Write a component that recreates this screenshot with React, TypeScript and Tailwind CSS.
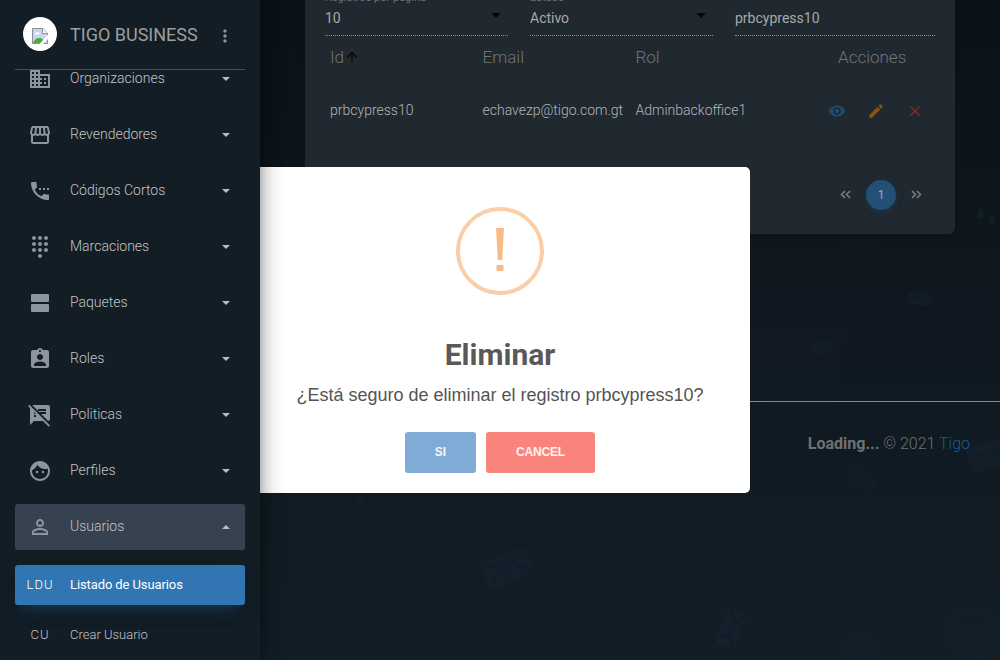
import type { ReactNode } from "react";
import {
  MdArrowUpward,
  MdAssignmentInd,
  MdBusiness,
  MdClose,
  MdDialpad,
  MdEdit,
  MdFace,
  MdMoreVert,
  MdPersonOutline,
  MdSettingsPhone,
  MdSpeakerNotesOff,
  MdStorefront,
  MdVisibility,
} from "react-icons/md";

function AgendaIcon() {
  return (
    <svg width="24" height="24" viewBox="0 0 24 24" fill="currentColor">
      <rect x="3" y="3" width="18" height="8" rx="1" />
      <rect x="3" y="13" width="18" height="8" rx="1" />
    </svg>
  );
}

const menu: { label: string; icon: ReactNode }[] = [
  { label: "Organizaciones", icon: <MdBusiness size={24} /> },
  { label: "Revendedores", icon: <MdStorefront size={24} /> },
  { label: "Códigos Cortos", icon: <MdSettingsPhone size={24} /> },
  { label: "Marcaciones", icon: <MdDialpad size={24} /> },
  { label: "Paquetes", icon: <AgendaIcon /> },
  { label: "Roles", icon: <MdAssignmentInd size={24} /> },
  { label: "Politicas", icon: <MdSpeakerNotesOff size={24} /> },
  { label: "Perfiles", icon: <MdFace size={24} /> },
  { label: "Usuarios", icon: <MdPersonOutline size={24} /> },
];

function BrokenImage() {
  return (
    <svg width="16" height="16" viewBox="0 0 16 16">
      <path d="M.5.5h10.300l4.700 4.700v10.300H.5z" fill="#c3d6f7" stroke="#8f8f8f" />
      <path d="M10.500.5v5h5" fill="#fff" stroke="#8f8f8f" />
      <path d="M2.500 6.500c0-1.600 1-2 1.800-1.800.5-1.500 2.600-1 2.700.3 1 0 1.300 1.500.2 1.500z" fill="#fff" />
      <path d="M1 15c1-3 3.500-5 6-5 2 0 3.500.8 4.500 2L9 15z" fill="#4fab35" />
      <path d="M16 6.500 7.500 16H11l5-5z" fill="#fff" />
    </svg>
  );
}

function Sidebar() {
  return (
    <aside className="relative z-20 flex h-[660px] w-[260px] shrink-0 flex-col bg-[#121d26] shadow-[0_10px_30px_-12px_rgba(0,0,0,0.42),0_4px_25px_0_rgba(0,0,0,0.22),0_8px_10px_-5px_rgba(0,0,0,0.2),0_0_12px_rgba(0,0,0,0.15)]">
      <header className="mx-[15px] flex h-[70px] shrink-0 items-center border-b border-[#47505a] pl-2">
        <div className="-mt-px flex size-[34px] items-center justify-center rounded-full bg-white pt-1">
          <BrokenImage />
        </div>
        <span className="ml-[13px] w-[143px] whitespace-nowrap text-[18px] leading-6 text-[#9e9e9e]">TIGO BUSINESS</span>
        <MdMoreVert size={20} className="mt-[3px] ml-[2px] text-[#8f96a0]" />
      </header>
      <nav className="flex-1 overflow-hidden px-[15px]">
        <div className="-mt-[14px] flex flex-col gap-[10px]">
          {menu.map(({ label, icon }) => {
            const open = label === "Usuarios";
            return (
              <div
                key={label}
                className={`flex h-[46px] items-center rounded-[3px] pr-[15px] pl-[13px] ${open ? "bg-[#36424f]" : ""}`}
              >
                <span className="-mt-px text-[#8c94a0]">{icon}</span>
                <span className="-mt-[2px] ml-[18px] flex-1 text-[14px] font-light text-[#c4c4c4]">{label}</span>
                <svg width="8" height="4" viewBox="0 0 8 4" fill="#bdbdbd">
                  <path d={open ? "M0 4h8L4 0z" : "M0 0h8L4 4z"} />
                </svg>
              </div>
            );
          })}
        </div>
        <div className="mt-[15px] flex flex-col gap-[10px] text-[13px] font-light">
          <div className="flex h-10 items-center rounded-[3px] bg-[#3176b3] text-white shadow-[0_12px_20px_-10px_rgba(49,118,179,0.28),0_4px_20px_0_rgba(0,0,0,0.12),0_7px_8px_-5px_rgba(49,118,179,0.2)]">
            <span className="w-[50px] text-center tracking-[1px]">LDU</span>
            <span className="ml-[5px] font-normal tracking-[-0.1px]">Listado de Usuarios</span>
          </div>
          <div className="flex h-10 items-center text-[#c4c4c4]">
            <span className="w-[50px] text-center tracking-[1px]">CU</span>
            <span className="ml-[5px]">Crear Usuario</span>
          </div>
        </div>
      </nav>
    </aside>
  );
}

function Field({ label, value, select }: { label: string; value: string; select?: boolean }) {
  return (
    <div className="flex h-9 flex-col border-b border-dotted border-[#8c9094]">
      <div className="flex h-[4px] items-end whitespace-nowrap text-[11px] leading-[13px] text-[#6d7174]">
        {label}
      </div>
      <div className="flex flex-1 items-start justify-between pt-[4px] text-[14px] leading-5 text-[#a7a9ab]">
        <span>{value}</span>
        {select && (
          <svg className="mt-[5px] mr-[7px]" width="10" height="5" viewBox="0 0 10 5" fill="#05080a">
            <path d="M0 0h10L5 5z" />
          </svg>
        )}
      </div>
    </div>
  );
}

function UsersCard() {
  return (
    <section className="mx-[45px] h-[234px] rounded-b-[6px] bg-[#202830] px-5 shadow-[0_1px_4px_rgba(0,0,0,0.14)]">
      <div className="grid grid-cols-[183px_183px_200px] gap-[22px]">
        <Field label="Registros por página" value="10" select />
        <Field label="Estado" value="Activo" select />
        <Field label="" value="prbcypress10" />
      </div>
      <div className="grid h-[42px] grid-cols-[152.500px_153px_202.500px_1fr] items-center pt-[2px] pl-[5px] text-[17px] font-light text-[#727476]">
        <span className="flex items-center">
          Id
          <MdArrowUpward size={16} className="-mt-[2px] text-[#05080a]" />
        </span>
        <span>Email</span>
        <span>Rol</span>
        <span>Acciones</span>
      </div>
      <div className="grid h-[65px] grid-cols-[152.500px_153px_192px_1fr] items-center pl-[5px] text-[14px] font-light text-[#b4b6b8]">
        <span>prbcypress10</span>
        <span>echavezp@tigo.com.gt</span>
        <span>Adminbackoffice1</span>
        <span className="flex gap-[21px]">
          <MdVisibility size={18} className="text-[#20496f]" />
          <MdEdit size={18} className="text-[#855515]" />
          <MdClose size={18} className="text-[#7d2a29]" />
        </span>
      </div>
      <div className="mt-[37px] flex h-[30px] items-center justify-end pr-[13px] text-[#767a7d]">
        <svg className="-mt-[2px]" width="11" height="9" viewBox="0 0 11 9" fill="none" stroke="currentColor" strokeWidth="1.700">
          <path d="M5 1 1.500 4.500 5 8M10 1 6.500 4.500 10 8" />
        </svg>
        <span className="mx-[15px] flex size-[30px] items-center justify-center rounded-full bg-[#245077] text-[12px] text-[#a7a9ab] shadow-[0_4px_5px_rgba(36,80,119,0.2),0_1px_10px_rgba(36,80,119,0.15)]">
          1
        </span>
        <svg className="-mt-[2px]" width="11" height="9" viewBox="0 0 11 9" fill="none" stroke="currentColor" strokeWidth="1.700">
          <path d="M1 1l3.500 3.500L1 8M6 1l3.500 3.500L6 8" />
        </svg>
      </div>
    </section>
  );
}

const envelopes = [
  { x: 483, y: 554, w: 48, h: 28, r: -24, o: 0.7 },
  { x: 711, y: 617, w: 40, h: 21, r: 115, o: 0.7 },
  { x: 841, y: 637, w: 38, h: 22, r: 0, o: 0.35 },
  { x: 908, y: 292, w: 24, h: 13, r: 5, o: 0.5 },
  { x: 810, y: 341, w: 23, h: 14, r: -18, o: 0.4 },
  { x: 968, y: 442, w: 38, h: 26, r: -17, o: 0.5 },
  { x: 848, y: 470, w: 28, h: 17, r: 32, o: 0.4 },
  { x: 940, y: 586, w: 100, h: 55, r: -44, o: 0.3 },
  { x: 974, y: 645, w: 20, h: 13, r: -18, o: 0.6 },
];

function Backdrop() {
  return (
    <svg className="absolute inset-0" width="1000" height="660" viewBox="0 0 1000 660">
      <path d="M750 300 850 240h25L820 440l-70-50z" fill="#142029" opacity=".18" />
      {envelopes.map((e) => (
        <g
          key={`${e.x}-${e.y}`}
          transform={`translate(${e.x} ${e.y}) rotate(${e.r} ${e.w / 2} ${e.h / 2})`}
          opacity={e.o}
        >
          <rect width={e.w} height={e.h} fill="#15222e" />
          <path
            d={`M0 0 ${e.w / 2} ${e.h * 0.55} ${e.w} 0M0 ${e.h} ${e.w * 0.36} ${e.h * 0.4}M${e.w} ${e.h} ${e.w * 0.64} ${e.h * 0.4}`}
            fill="none"
            stroke="#0f1921"
            strokeWidth="1"
          />
        </g>
      ))}
      <g fill="#14222b" opacity=".7">
        <ellipse cx="721" cy="529" rx="3.500" ry="2.500" />
        <ellipse cx="696" cy="565" rx="3.500" ry="2" />
        <ellipse cx="360" cy="503" rx="3" ry="4" />
        <rect x="978" y="209" width="5" height="9" />
        <rect x="989" y="216" width="5" height="8" />
      </g>
    </svg>
  );
}

function DeleteDialog() {
  return (
    <div
      role="dialog"
      className="absolute top-[167px] left-[250px] z-10 flex h-[326px] w-[500px] flex-col items-center rounded-[5px] bg-white pt-10"
    >
      <div className="flex size-[88px] items-center justify-center rounded-full border-4 border-[#facea8]">
        <svg width="8" height="43" viewBox="0 0 8 43" fill="#f8bb86" className="-mt-[3px]">
          <path d="M0 0h8L6.200 32H1.800zM.5 37h7v6h-7z" />
        </svg>
      </div>
      <h2 className="mt-[40px] text-[30px] leading-10 font-bold text-[#595959]">Eliminar</h2>
      <p className="mt-[7px] font-['Liberation_Sans',Arial,sans-serif] text-[18px] leading-[27px] whitespace-nowrap text-[#545454]">
        ¿Está seguro de eliminar el registro prbcypress10?
      </p>
      <div className="mt-[23px] flex gap-[10px] font-['Liberation_Sans',Arial,sans-serif] text-[12px] font-bold text-white/90">
        <button className="h-[41px] w-[71px] rounded-[3px] bg-[#80abd6] pb-[2px]">SI</button>
        <button className="h-[41px] w-[109px] rounded-[3px] bg-[#f9847b] pb-[2px] tracking-[-0.2px]">CANCEL</button>
      </div>
    </div>
  );
}

export default function App() {
  return (
    <div className="relative flex h-[660px] w-[1000px] overflow-hidden bg-linear-to-b from-[#0b1118] via-[#0f1820] to-[#121e26] font-[Roboto,sans-serif]">
      <Backdrop />
      <Sidebar />
      <main className="relative flex flex-1 flex-col">
        <UsersCard />
        <footer className="mt-[167px] border-t border-[#85898c] pt-[27px] pr-[30px] text-right text-[16px] leading-[30px] font-light text-[#6f7173]">
          <b className="font-bold">Loading...</b> © 2021 <a className="text-[#185a9b]">Tigo</a>
        </footer>
      </main>
      <DeleteDialog />
    </div>
  );
}
